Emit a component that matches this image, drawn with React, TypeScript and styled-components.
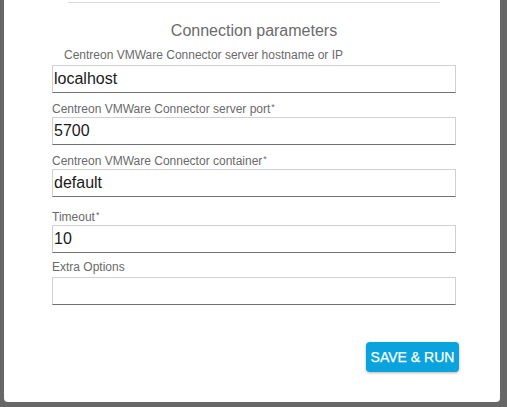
import React from "react";
import styled, { createGlobalStyle } from "styled-components";

const Global = createGlobalStyle`
  html, body { margin: 0; padding: 0; background: #676767; }
  body { font-family: "Liberation Sans", Arial, sans-serif; }
`;

const Page = styled.div`
  width: 507px;
  height: 407px;
  overflow: hidden;
`;

const Dialog = styled.div`
  margin-left: 4px;
  width: 496px;
  height: 402px;
  background: #fff;
  border-radius: 0 0 4px 4px;
  box-sizing: border-box;
  padding: 2px 44px 0 48px;
  display: flex;
  flex-direction: column;
`;

const Divider = styled.div`
  height: 1px;
  background: #dcdcdc;
  margin: 0 16px;
`;

const Title = styled.h2`
  margin: 18px 0 8px;
  font-size: 16px;
  line-height: 20px;
  font-weight: 400;
  color: #6b6b6b;
  text-align: center;
`;

const Field = styled.div<{ $gap?: number }>`
  display: flex;
  flex-direction: column;
  margin-top: ${(p) => p.$gap ?? 0}px;
`;

const Label = styled.label<{ $wrapped?: boolean }>`
  display: block;
  height: 13px;
  font-size: 12px;
  line-height: 13px;
  color: #6a6a6a;
  white-space: ${(p) => (p.$wrapped ? "normal" : "nowrap")};
  width: ${(p) => (p.$wrapped ? "75%" : "auto")};
  text-align: ${(p) => (p.$wrapped ? "center" : "left")};
  margin-bottom: 3px;
`;

const Star = styled.span`
  font-size: 9px;
  vertical-align: 3px;
  margin-left: 1px;
`;

const Input = styled.input`
  position: relative;
  box-sizing: border-box;
  width: 100%;
  height: 28px;
  margin: 0;
  padding: 0 1px;
  border: 1px solid #d0d0d0;
  border-bottom: 1px solid #707070;
  background: #fff;
  font-family: "Liberation Sans", Arial, sans-serif;
  font-size: 16px;
  color: #1a1a1a;
  outline: none;
  border-radius: 0;
`;

const Actions = styled.div`
  display: flex;
  justify-content: flex-end;
  margin-top: 37px;
  margin-right: -3px;
`;

const Button = styled.button`
  width: 93px;
  height: 30px;
  padding: 0;
  white-space: nowrap;
  border: none;
  border-radius: 4px;
  background: #0aa3dd;
  color: #fff;
  font-family: "Liberation Sans", Arial, sans-serif;
  font-size: 14px;
  font-weight: 400;
  -webkit-text-stroke: 0.25px #fff;
  box-shadow: 0 1px 3px rgba(0, 0, 0, 0.3);
  cursor: pointer;
`;

const fields = [
  { label: "Centreon VMWare Connector server hostname or IP address", value: "localhost", wrapped: true, gap: 0 },
  { label: "Centreon VMWare Connector server port", value: "5700", gap: 8 },
  { label: "Centreon VMWare Connector container", value: "default", gap: 8 },
  { label: "Timeout", value: "10", gap: 12 },
  { label: "Extra Options", value: "", gap: 8, optional: true },
];

export default function App() {
  return (
    <Page>
      <Global />
      <Dialog>
        <Divider />
        <Title>Connection parameters</Title>
        {fields.map((f) => (
          <Field key={f.label} $gap={f.gap}>
            <Label $wrapped={f.wrapped}>
              {f.label}
              {!f.optional && <Star>*</Star>}
            </Label>
            <Input defaultValue={f.value} />
          </Field>
        ))}
        <Actions>
          <Button>SAVE &amp; RUN</Button>
        </Actions>
      </Dialog>
    </Page>
  );
}
